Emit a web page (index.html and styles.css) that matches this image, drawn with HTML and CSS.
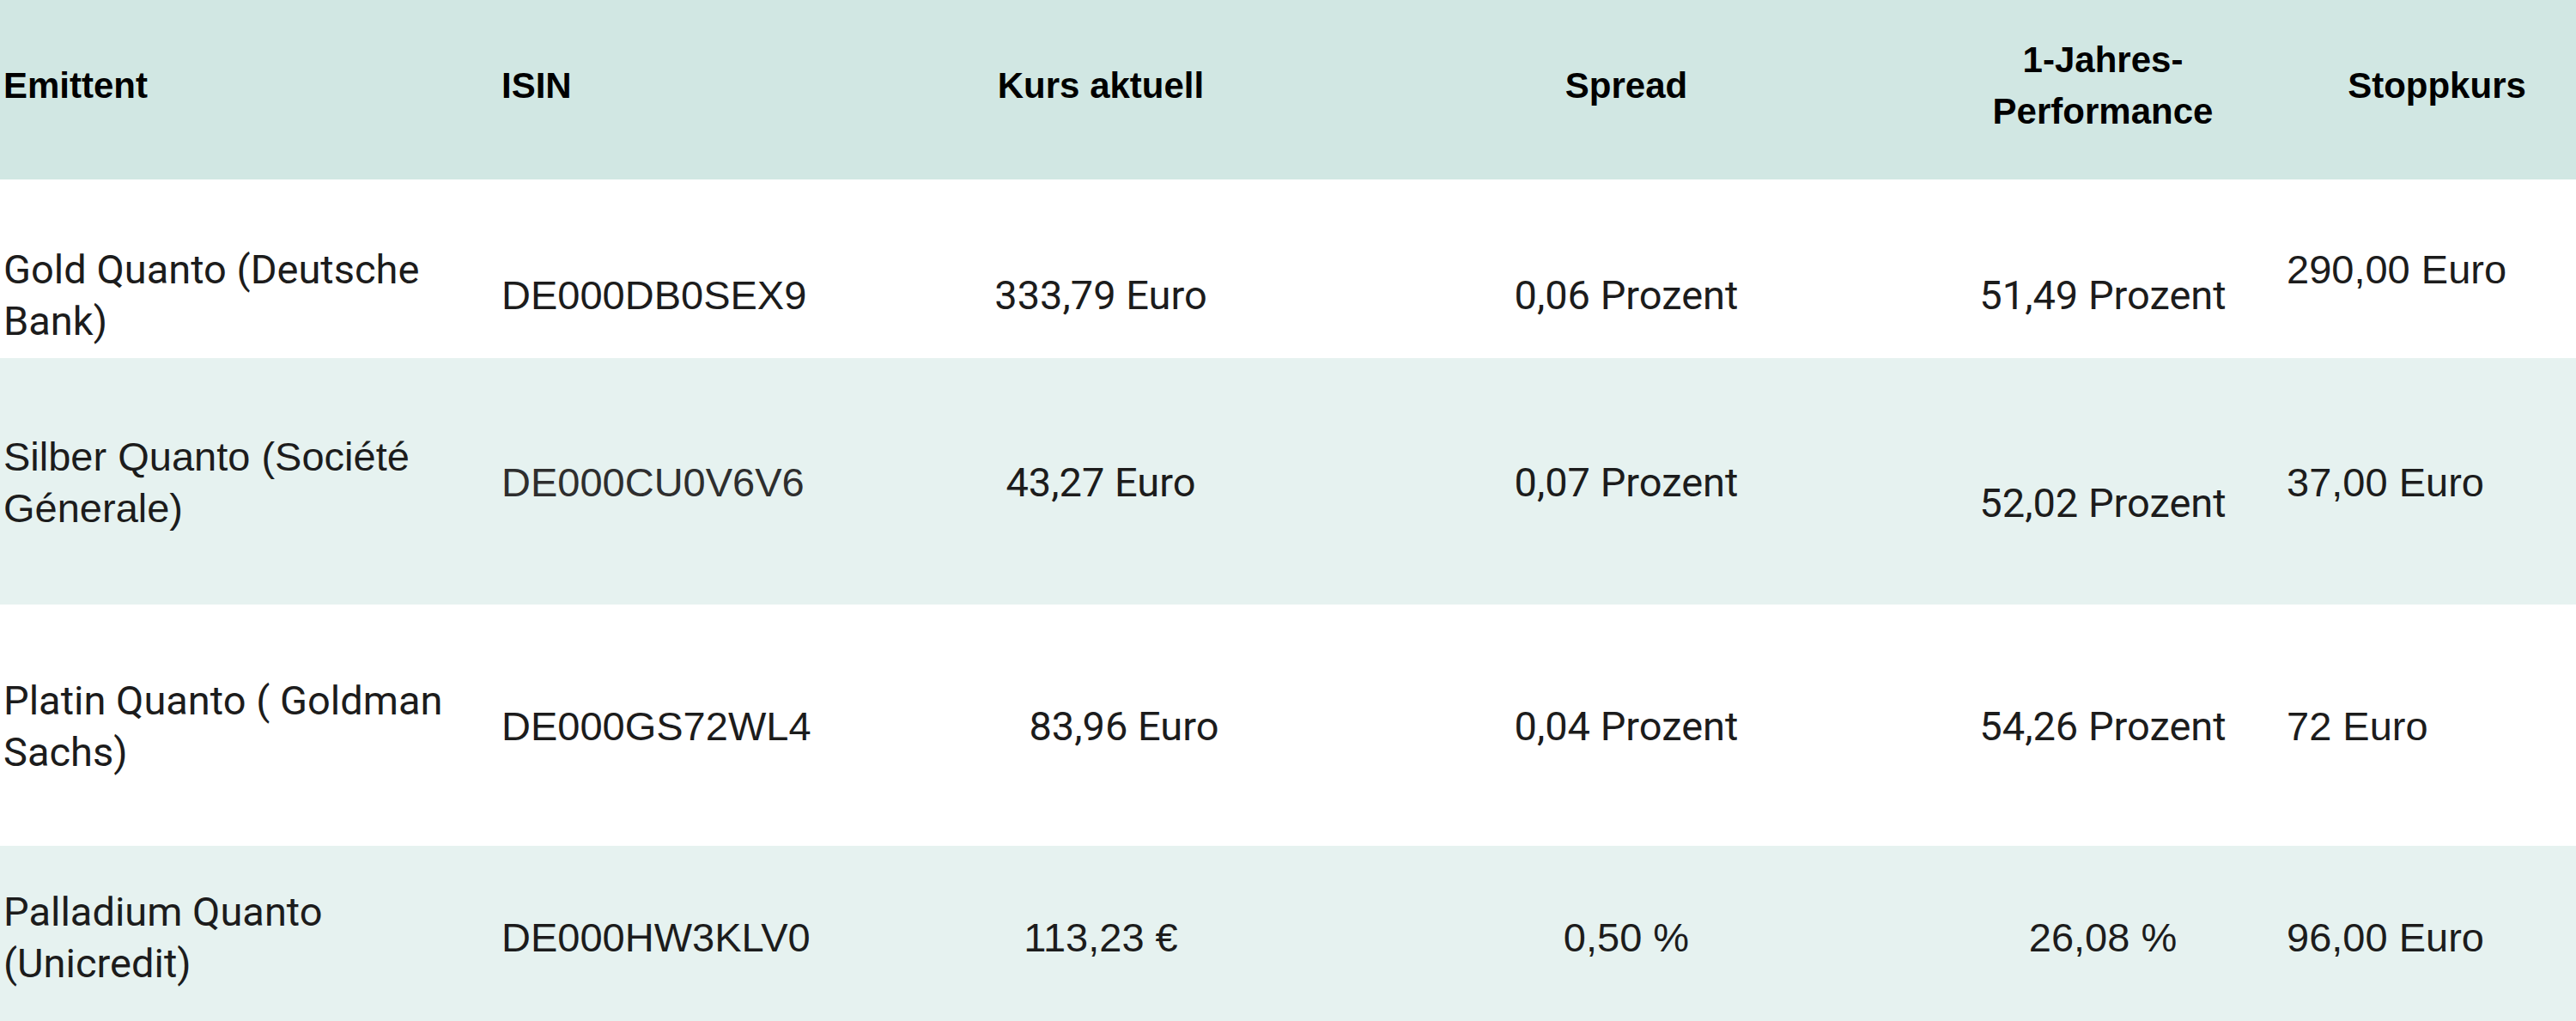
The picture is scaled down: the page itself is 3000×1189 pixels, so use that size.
FILE: index.html
```html
<!DOCTYPE html>
<html lang="de">
<head>
<meta charset="utf-8">
<title>Quanto-Zertifikate auf Edelmetalle</title>
<link rel="stylesheet" href="styles.css">
</head>
<body>
<div class="wrap">
  <table class="quotes">
    <colgroup>
      <col class="c-emit">
      <col class="c-isin">
      <col class="c-kurs">
      <col class="c-spread">
      <col class="c-perf">
      <col class="c-stop">
    </colgroup>
    <thead>
      <tr>
        <th class="left">Emittent</th>
        <th class="left">ISIN</th>
        <th>Kurs aktuell</th>
        <th>Spread</th>
        <th>1-Jahres-<br>Performance</th>
        <th>Stoppkurs</th>
      </tr>
    </thead>
    <tbody>
      <tr class="r1">
        <td class="left fb">Gold Quanto (Deutsche<br>Bank)</td>
        <td class="left fa">DE000DB0SEX9</td>
        <td class="fb">333,79 Euro</td>
        <td class="fb">0,06 Prozent</td>
        <td class="fb">51,49 Prozent</td>
        <td class="left fa top">290,00 Euro</td>
      </tr>
      <tr class="r2 alt">
        <td class="left fa">Silber Quanto (Société<br>Génerale)</td>
        <td class="left fa grey">DE000CU0V6V6</td>
        <td class="fb">43,27 Euro</td>
        <td class="fb">0,07 Prozent</td>
        <td class="fb lower">52,02 Prozent</td>
        <td class="left fa">37,00 Euro</td>
      </tr>
      <tr class="r3">
        <td class="left fb">Platin Quanto ( Goldman<br>Sachs)</td>
        <td class="left fa">DE000GS72WL4</td>
        <td class="fb nudge">83,96 Euro</td>
        <td class="fb">0,04 Prozent</td>
        <td class="fb">54,26 Prozent</td>
        <td class="left fa">72 Euro</td>
      </tr>
      <tr class="r4 alt">
        <td class="left fb">Palladium Quanto<br>(Unicredit)</td>
        <td class="left fa">DE000HW3KLV0</td>
        <td class="fa">113,23 €</td>
        <td class="fa">0,50 %</td>
        <td class="fa">26,08 %</td>
        <td class="left fa">96,00 Euro</td>
      </tr>
    </tbody>
  </table>
</div>
</body>
</html>
```

FILE: styles.css
```css
html, body {
  margin: 0;
  padding: 0;
  background: #ffffff;
}

.wrap {
  width: 3000px;
  overflow: hidden;
}

.quotes {
  width: 3017px;
  table-layout: fixed;
  border-collapse: collapse;
  border-spacing: 0;
}

.c-emit { width: 580px; }
.c-isin { width: 435px; }
.c-kurs { width: 534px; }
.c-spread { width: 690px; }
.c-perf { width: 420px; }
.c-stop { width: 358px; }

th, td {
  padding-left: 4px;
  padding-right: 4px;
  line-height: 60px;
  vertical-align: middle;
  text-align: center;
  white-space: nowrap;
}

th {
  font-family: "Liberation Sans", Arial, sans-serif;
  font-weight: 700;
  font-size: 42px;
  color: #000000;
  background: #d1e7e3;
  padding-top: 40px;
  padding-bottom: 49px;
}

td {
  font-size: 47px;
  color: #1c1c1c;
}

.left { text-align: left; }

.fa { font-family: "Liberation Sans", Arial, sans-serif; }
.fb { font-family: Roboto, "Liberation Sans", sans-serif; }

.grey { color: #2e2e2e; }

.alt { background: #e6f2f0; }

.r1 td { padding-top: 75px; padding-bottom: 13px; }
.r2 td { padding-top: 85px; padding-bottom: 82px; }
.r3 td { padding-top: 82px; padding-bottom: 79px; }
.r4 td { padding-top: 47px; padding-bottom: 37px; }

.r1 td.top { vertical-align: top; }
.r2 td.lower { padding-top: 133px; }
.r3 td.nudge { padding-left: 58px; }
```
